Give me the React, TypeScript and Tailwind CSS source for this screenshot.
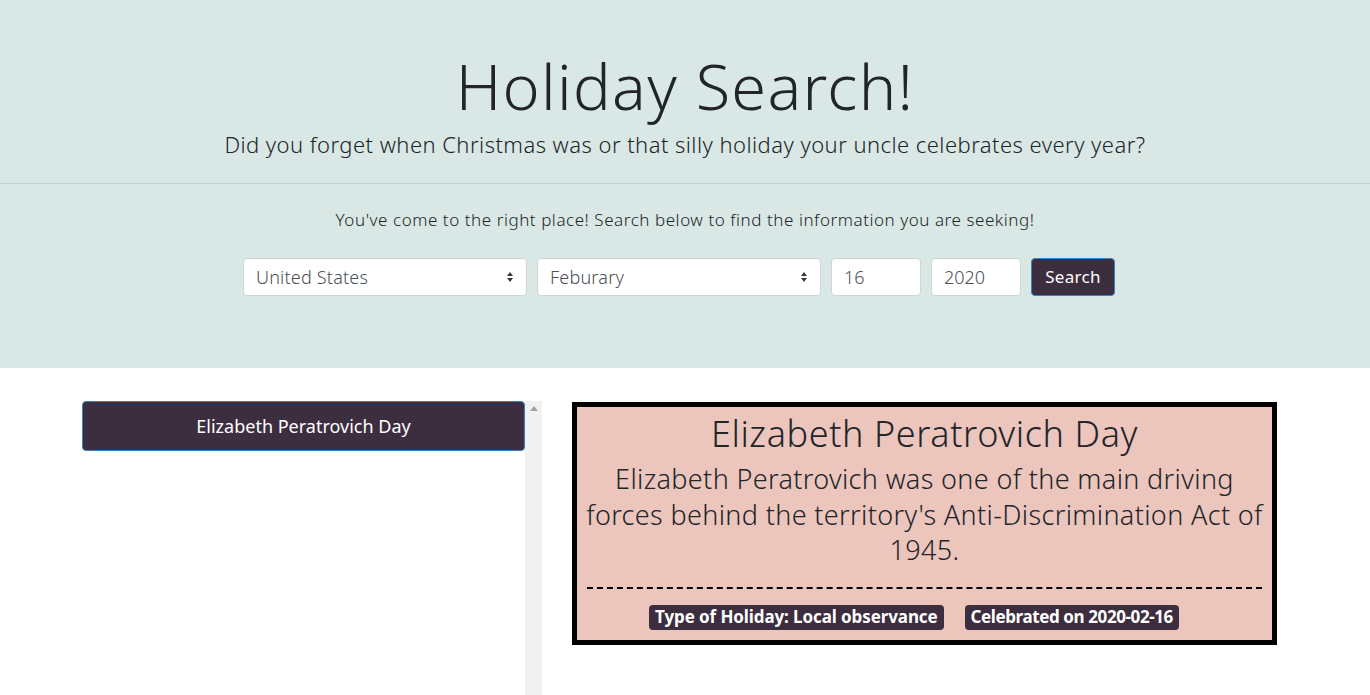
import React from "react";

const font = { fontFamily: '"Noto Sans", "Open Sans", sans-serif' };

function Caret() {
  return (
    <svg width="8" height="12" viewBox="0 0 8 12" className="absolute right-3 top-1/2 -translate-y-1/2">
      <path d="M4 1 L7 5 H1 Z" fill="#343a40" />
      <path d="M4 11 L7 7 H1 Z" fill="#343a40" />
    </svg>
  );
}

export default function App() {
  return (
    <div className="w-full h-[695px] overflow-hidden bg-white text-[#212529]" style={font}>
      <div className="bg-[#d9e8e5] h-[368px] flex flex-col items-center">
        <h1 className="mt-[50px] text-[63px] leading-[72px] font-light tracking-[1.3px]">Holiday Search!</h1>
        <p className="mt-[7px] text-[22px] leading-[30px] font-light tracking-[0.45px]">
          Did you forget when Christmas was or that silly holiday your uncle celebrates every year?
        </p>
        <div className="w-full h-px bg-[#c3d2cf] mt-[24px]" />
        <p className="mt-[24px] text-[17px] leading-[24px] font-light tracking-[0.55px]">
          You've come to the right place! Search below to find the information you are seeking!
        </p>
        <div className="mt-[26px] mr-[12px] flex items-center gap-[10px]">
          <div className="relative w-[284px] h-[38px] bg-white border border-[#ced4da] rounded-[4px] flex items-center pl-3 text-[18px] font-light text-[#495057] tracking-[0.2px]">
            United States
            <Caret />
          </div>
          <div className="relative w-[284px] h-[38px] bg-white border border-[#ced4da] rounded-[4px] flex items-center pl-3 text-[18px] font-light text-[#495057] tracking-[0.2px]">
            Feburary
            <Caret />
          </div>
          <div className="w-[90px] h-[38px] bg-white border border-[#ced4da] rounded-[4px] flex items-center pl-3 text-[18px] font-light text-[#495057]">
            16
          </div>
          <div className="w-[90px] h-[38px] bg-white border border-[#ced4da] rounded-[4px] flex items-center pl-3 text-[18px] font-light text-[#495057]">
            2020
          </div>
          <div className="w-[84px] h-[38px] bg-[#3c2e3e] border border-[#3b82c4] rounded-[4px] flex items-center justify-center text-[17px] text-white tracking-[0.3px]">
            Search
          </div>
        </div>
      </div>
      <div className="flex pt-[33px]">
        <div className="ml-[82px] w-[460px] h-[294px] flex">
          <div className="w-[443px]">
            <div className="h-[50px] bg-[#3c2e3e] border border-[#3b82c4] rounded-[4px] flex items-center justify-center text-white text-[18px]">
              Elizabeth Peratrovich Day
            </div>
          </div>
          <div className="w-[17px] bg-[#f1f1f1] flex justify-center pt-[5px]">
            <svg width="8" height="5" viewBox="0 0 8 5"><path d="M4 0 L8 5 H0 Z" fill="#a3a3a3" /></svg>
          </div>
        </div>
        <div className="ml-[30px] mt-px w-[705px] h-[243px] border-[5px] border-black bg-[#ecc5bd] flex flex-col items-center px-[10px]">
          <h2 className="mt-[5px] text-[36px] leading-[44px] font-light tracking-[0.6px] whitespace-nowrap">Elizabeth Peratrovich Day</h2>
          <p className="mt-[5px] text-[27px] leading-[35.5px] font-light text-center tracking-[0.35px] whitespace-nowrap">
            Elizabeth Peratrovich was one of the main driving
            <br />
            forces behind the territory's Anti-Discrimination Act of
            <br />
            1945.
          </p>
          <div className="w-full mt-[19px] border-t-2 border-dashed border-black" />
          <div className="mt-[16px] pr-[21px] flex gap-[21px]">
            <span className="h-[25px] px-[6px] bg-[#3c2e3e] rounded-[4px] text-white font-bold text-[17px] flex items-center tracking-[-0.1px]">
              Type of Holiday: Local observance
            </span>
            <span className="h-[25px] px-[6px] bg-[#3c2e3e] rounded-[4px] text-white font-bold text-[17px] flex items-center tracking-[-0.4px]">
              Celebrated on 2020-02-16
            </span>
          </div>
        </div>
      </div>
    </div>
  );
}
